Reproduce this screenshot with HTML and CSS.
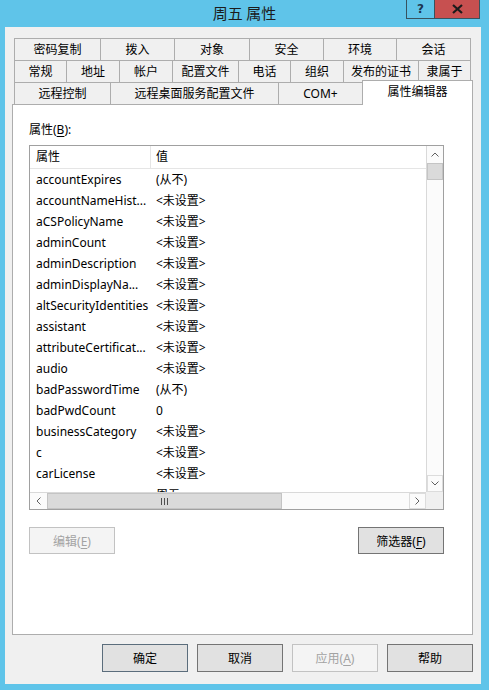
FILE: index.html
```html
<!DOCTYPE html>
<html lang="zh-CN">
<head>
    <meta charset="UTF-8">
    <title>周五 属性</title>
    <link rel="stylesheet" href="styles.css">
</head>
<body>
    <div class="window">
        <div class="titlebar">
            <h1 class="title">周五 属性</h1>
            <div class="caption-buttons">
                <span class="cap-btn help">?</span>
                <span class="cap-btn close">
                    <svg width="11" height="10" viewBox="0 0 11 10"><path d="M1 1 L10 9 M10 1 L1 9" stroke="#1b1b1b" stroke-width="2.2" fill="none"/></svg>
                </span>
            </div>
        </div>

        <div class="frame">
            <div class="tabs">
                <div class="tab-row row1">
                    <div class="tab">密码复制</div>
                    <div class="tab">拨入</div>
                    <div class="tab">对象</div>
                    <div class="tab">安全</div>
                    <div class="tab">环境</div>
                    <div class="tab">会话</div>
                </div>
                <div class="tab-row row2">
                    <div class="tab">常规</div>
                    <div class="tab">地址</div>
                    <div class="tab">帐户</div>
                    <div class="tab">配置文件</div>
                    <div class="tab">电话</div>
                    <div class="tab">组织</div>
                    <div class="tab">发布的证书</div>
                    <div class="tab">隶属于</div>
                </div>
                <div class="tab-row row3">
                    <div class="tab">远程控制</div>
                    <div class="tab">远程桌面服务配置文件</div>
                    <div class="tab">COM+</div>
                    <div class="tab active">属性编辑器</div>
                </div>
            </div>

            <div class="panel">
                <div class="label">属性(<u>B</u>):</div>

                <div class="listbox">
                    <div class="list-view">
                        <div class="list-header">
                            <span class="name">属性</span>
                            <span class="value">值</span>
                        </div>
                        <div class="row"><span class="name">accountExpires</span><span class="value">(从不)</span></div>
                        <div class="row"><span class="name">accountNameHist...</span><span class="value">&lt;未设置&gt;</span></div>
                        <div class="row"><span class="name">aCSPolicyName</span><span class="value">&lt;未设置&gt;</span></div>
                        <div class="row"><span class="name">adminCount</span><span class="value">&lt;未设置&gt;</span></div>
                        <div class="row"><span class="name">adminDescription</span><span class="value">&lt;未设置&gt;</span></div>
                        <div class="row"><span class="name">adminDisplayNa...</span><span class="value">&lt;未设置&gt;</span></div>
                        <div class="row"><span class="name">altSecurityIdentities</span><span class="value">&lt;未设置&gt;</span></div>
                        <div class="row"><span class="name">assistant</span><span class="value">&lt;未设置&gt;</span></div>
                        <div class="row"><span class="name">attributeCertificat...</span><span class="value">&lt;未设置&gt;</span></div>
                        <div class="row"><span class="name">audio</span><span class="value">&lt;未设置&gt;</span></div>
                        <div class="row"><span class="name">badPasswordTime</span><span class="value">(从不)</span></div>
                        <div class="row"><span class="name">badPwdCount</span><span class="value">0</span></div>
                        <div class="row"><span class="name">businessCategory</span><span class="value">&lt;未设置&gt;</span></div>
                        <div class="row"><span class="name">c</span><span class="value">&lt;未设置&gt;</span></div>
                        <div class="row"><span class="name">carLicense</span><span class="value">&lt;未设置&gt;</span></div>
                        <div class="row"><span class="name">cn</span><span class="value">周五</span></div>
                    </div>

                    <div class="vscroll">
                        <div class="sb-btn">
                            <svg width="8" height="5" viewBox="0 0 8 5"><polyline points="0.5,4.5 4,1 7.5,4.5" stroke="#606060" fill="none"/></svg>
                        </div>
                        <div class="vthumb"></div>
                        <div class="sb-track"></div>
                        <div class="sb-btn boxed">
                            <svg width="8" height="5" viewBox="0 0 8 5"><polyline points="0.5,0.5 4,4 7.5,0.5" stroke="#606060" fill="none"/></svg>
                        </div>
                    </div>

                    <div class="hscroll">
                        <div class="sb-btn">
                            <svg width="5" height="8" viewBox="0 0 5 8"><polyline points="4.5,0.5 1,4 4.5,7.5" stroke="#606060" fill="none"/></svg>
                        </div>
                        <div class="hthumb">
                            <svg width="7" height="7" viewBox="0 0 7 7"><path d="M0.5 0 V7 M3.5 0 V7 M6.5 0 V7" stroke="#505050"/></svg>
                        </div>
                        <div class="sb-track"></div>
                        <div class="sb-btn boxed">
                            <svg width="5" height="8" viewBox="0 0 5 8"><polyline points="0.5,0.5 4,4 0.5,7.5" stroke="#606060" fill="none"/></svg>
                        </div>
                    </div>

                    <div class="corner"></div>
                </div>

                <div class="panel-buttons">
                    <button class="btn disabled">编辑(<u>E</u>)</button>
                    <button class="btn">筛选器(<u>F</u>)</button>
                </div>
            </div>

            <div class="dialog-buttons">
                <button class="btn big default">确定</button>
                <button class="btn big">取消</button>
                <button class="btn big disabled">应用(<u>A</u>)</button>
                <button class="btn big">帮助</button>
            </div>
        </div>
    </div>
</body>
</html>
```

FILE: styles.css
```css
* {
    margin: 0;
    padding: 0;
    box-sizing: border-box;
}

body {
    width: 489px;
    height: 690px;
    overflow: hidden;
    background: #5fc4e9;
    font-family: 'Noto Sans', 'Noto Sans CJK SC', sans-serif;
    font-size: 12px;
    color: #000;
}

u {
    text-underline-offset: 2px;
}

.window {
    height: 690px;
    display: flex;
    flex-direction: column;
}

/* title bar */

.titlebar {
    height: 27px;
    display: grid;
    grid-template-columns: 1fr auto 1fr;
}

.title {
    grid-column: 2;
    font-family: 'Noto Sans CJK SC', sans-serif;
    font-size: 15px;
    font-weight: normal;
    line-height: 25px;
    color: #1c1c1c;
}

.caption-buttons {
    grid-column: 3;
    justify-self: end;
    display: flex;
    align-self: start;
    margin-right: 9px;
}

.cap-btn {
    height: 19px;
    display: flex;
    align-items: center;
    justify-content: center;
    border: 1px solid #37535f;
    border-top: none;
}

.help {
    width: 28px;
    border-right: none;
    font-family: 'DejaVu Sans', sans-serif;
    font-size: 12px;
    font-weight: bold;
    color: #1d3550;
}

.close {
    width: 46px;
    background: #c75050;
}

/* dialog frame */

.frame {
    flex: 1;
    margin: 0 8px 6px 5px;
    background: #f0f0f0;
    padding: 11px 8px 12px 7px;
    display: flex;
    flex-direction: column;
}

.tabs {
    margin: 0 2px;
}

.tab-row {
    display: grid;
    height: 22px;
}

.row1 {
    grid-template-columns: 86px 74px 75px 74px 73px 75px;
}

.row2 {
    grid-template-columns: 52px 53px 53px 66px 52px 53px 75px 53px;
}

.row3 {
    grid-template-columns: 96px 168px 84px 109px;
}

.tab {
    background: #f0f0f0;
    border-top: 1px solid #adadad;
    border-left: 1px solid #adadad;
    text-align: center;
    line-height: 21px;
    white-space: nowrap;
}

.tab:last-child {
    border-right: 1px solid #adadad;
}

.tab.active {
    position: relative;
    z-index: 1;
    background: #fff;
    margin: -2px -2px -1px 0;
}

.panel {
    flex: 1;
    background: #fff;
    border: 1px solid #adadad;
    padding: 17px 28px 0 16px;
}

.label {
    line-height: 16px;
    height: 16px;
}

/* list view */

.listbox {
    margin-top: 7px;
    height: 365px;
    border: 1px solid #a0a0a0;
    display: grid;
    grid-template-columns: 1fr 17px;
    grid-template-rows: 1fr 17px;
}

.list-view {
    overflow: hidden;
    background: #fff;
}

.list-header {
    height: 23px;
    display: flex;
    border-bottom: 1px solid #e5e5e5;
    line-height: 21px;
}

.list-header .name {
    border-right: 1px solid #e5e5e5;
}

.row {
    height: 21px;
    display: flex;
    line-height: 21px;
}

.name {
    width: 121px;
    padding-left: 6px;
    overflow: hidden;
    white-space: nowrap;
    flex-shrink: 0;
}

.value {
    padding-left: 5px;
    white-space: nowrap;
}

/* scrollbars */

.vscroll {
    display: flex;
    flex-direction: column;
    background: #fbfbfb;
    border-left: 1px solid #d9d9d9;
}

.hscroll {
    display: flex;
    background: #fbfbfb;
    border-top: 1px solid #d9d9d9;
}

.sb-btn {
    flex: 0 0 17px;
    display: flex;
    align-items: center;
    justify-content: center;
}

.sb-btn.boxed {
    border: 1px solid #dcdcdc;
}

.sb-track {
    flex: 1;
}

.vthumb {
    flex: 0 0 17px;
    background: #dadada;
    border: 1px solid #c4c4c4;
}

.hthumb {
    flex: 0 0 235px;
    background: #dadada;
    border: 1px solid #c4c4c4;
    display: flex;
    align-items: center;
    justify-content: center;
}

.corner {
    background: #f0f0f0;
}

/* buttons */

.btn {
    width: 86px;
    height: 27px;
    background: #e1e1e1;
    border: 1px solid #747474;
    font-family: 'Noto Sans', 'Noto Sans CJK SC', sans-serif;
    font-size: 12px;
    color: #000;
}

.btn.big {
    height: 28px;
}

.btn.disabled {
    background: #f4f4f4;
    border-color: #c2c2c2;
    color: #a3a3a3;
}

.btn.default {
    border-color: #5b6d7c;
}

.panel-buttons {
    width: 415px;
    margin-top: 17px;
    display: flex;
    justify-content: space-between;
}

.dialog-buttons {
    margin-top: 9px;
    display: flex;
    justify-content: flex-end;
    gap: 9px;
}
```
